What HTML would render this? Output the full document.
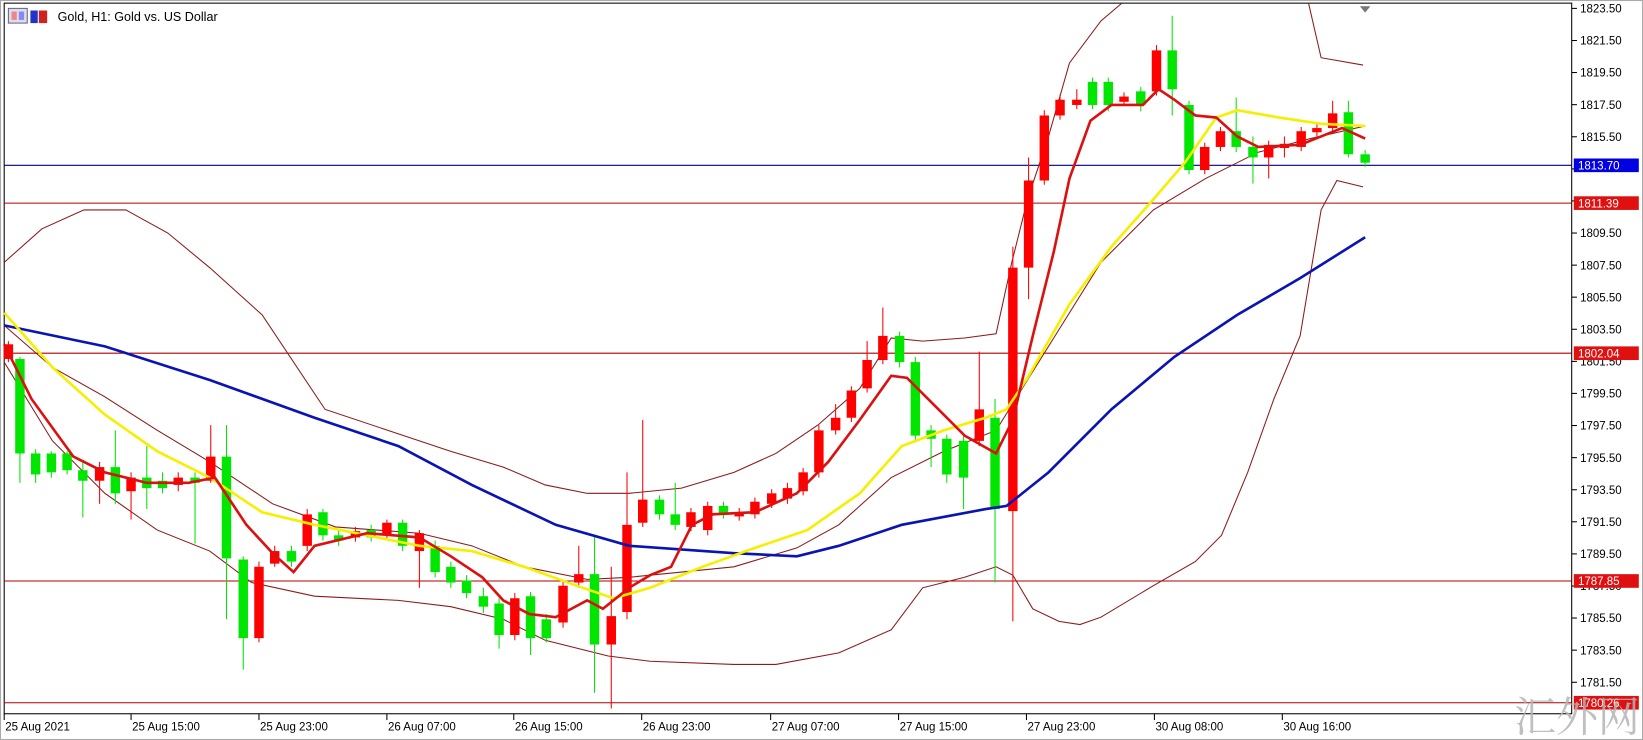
<!DOCTYPE html>
<html><head><meta charset="utf-8"><style>
html,body{margin:0;padding:0;background:#fff;width:1643px;height:740px;overflow:hidden}
svg{display:block}
text{font-family:"Liberation Sans",Tahoma,sans-serif;font-size:11px;fill:#000}
</style></head><body>
<svg width="1643" height="740" viewBox="0 0 1567 705" preserveAspectRatio="none" xmlns="http://www.w3.org/2000/svg">
<rect x="0" y="0" width="1567" height="705" fill="#fff"/>
<rect x="0.5" y="0.5" width="1566" height="704" fill="none" stroke="#aaa"/>
<rect x="4" y="3" width="1495" height="677" fill="none" stroke="#000" stroke-width="1"/>
<rect x="8" y="8" width="18" height="14" fill="#dde" stroke="#668"/>
<rect x="11" y="11" width="5" height="8" fill="#e88"/><rect x="18" y="11" width="5" height="8" fill="#88e"/>
<rect x="29" y="10" width="7" height="12" fill="#2233cc"/><rect x="37" y="10" width="8" height="12" fill="#cc2222"/>
<text x="55" y="20" style="font-size:12px">Gold, H1:  Gold vs. US Dollar</text>
<polygon points="1297,6 1307,6 1302,12" fill="#777"/>
<line x1="4" y1="157.5" x2="1499" y2="157.5" stroke="#000080"/>
<g stroke="#b00000"><line x1="4" y1="193.5" x2="1499" y2="193.5"/><line x1="4" y1="336.5" x2="1499" y2="336.5"/><line x1="4" y1="553.5" x2="1499" y2="553.5"/><line x1="4" y1="669.5" x2="1499" y2="669.5"/></g>
<g fill="none" stroke="#8b1a1a" stroke-width="1">
<polyline points="4,250 40,218 80,200 120,200 160,222 200,255 250,300 310,390 370,410 430,430 480,445 520,462 560,470 600,470 650,465 700,450 740,432 780,405 820,370 850,322 880,325 920,322 950,318 965,250 980,190 1000,130 1020,60 1050,20 1070,3"/>
<polyline points="1248,3 1260,55 1300,62"/>
<polyline points="4,310 50,350 100,378 150,410 200,440 260,480 320,502 400,508 450,520 500,540 560,552 600,550 650,545 700,540 760,522 800,500 850,455 900,430 950,410 1000,330 1050,250 1100,200 1150,170 1200,145 1250,132 1302,120"/>
<polyline points="4,345 50,420 100,470 150,505 200,525 240,555 300,568 380,572 430,578 480,590 520,610 580,625 620,630 700,633 740,633 800,622 850,600 880,560 920,550 950,540 966,548 985,580 1010,592 1030,595 1050,588 1100,558 1140,535 1165,510 1190,450 1215,380 1240,320 1260,200 1275,172 1300,178"/>
</g>
<g stroke="#ff0000" stroke-width="1">
<line x1="8" y1="325" x2="8" y2="345"/><line x1="95" y1="440" x2="95" y2="480"/><line x1="125" y1="450" x2="125" y2="495"/><line x1="170" y1="450" x2="170" y2="468"/><line x1="201" y1="405" x2="201" y2="460"/><line x1="247" y1="535" x2="247" y2="612"/><line x1="262" y1="520" x2="262" y2="540"/><line x1="293" y1="485" x2="293" y2="525"/><line x1="339" y1="502" x2="339" y2="516"/><line x1="369" y1="495" x2="369" y2="514"/><line x1="400" y1="505" x2="400" y2="560"/><line x1="491" y1="565" x2="491" y2="610"/><line x1="537" y1="553" x2="537" y2="598"/><line x1="552" y1="520" x2="552" y2="560"/><line x1="583" y1="540" x2="583" y2="675"/><line x1="598" y1="450" x2="598" y2="590"/><line x1="613" y1="400" x2="613" y2="502"/><line x1="659" y1="484" x2="659" y2="506"/><line x1="675" y1="478" x2="675" y2="510"/><line x1="705" y1="484" x2="705" y2="496"/><line x1="720" y1="474" x2="720" y2="494"/><line x1="736" y1="466" x2="736" y2="484"/><line x1="751" y1="460" x2="751" y2="480"/><line x1="766" y1="446" x2="766" y2="472"/><line x1="781" y1="405" x2="781" y2="455"/><line x1="797" y1="385" x2="797" y2="414"/><line x1="812" y1="368" x2="812" y2="402"/><line x1="827" y1="325" x2="827" y2="374"/><line x1="842" y1="293" x2="842" y2="347"/><line x1="934" y1="335" x2="934" y2="425"/><line x1="966" y1="235" x2="966" y2="592"/><line x1="981" y1="150" x2="981" y2="285"/><line x1="996" y1="105" x2="996" y2="176"/><line x1="1011" y1="90" x2="1011" y2="114"/><line x1="1027" y1="85" x2="1027" y2="104"/><line x1="1072" y1="88" x2="1072" y2="101"/><line x1="1103" y1="43" x2="1103" y2="91"/><line x1="1149" y1="136" x2="1149" y2="166"/><line x1="1164" y1="121" x2="1164" y2="144"/><line x1="1210" y1="134" x2="1210" y2="170"/><line x1="1225" y1="130" x2="1225" y2="150"/><line x1="1241" y1="121" x2="1241" y2="144"/><line x1="1256" y1="118" x2="1256" y2="130"/><line x1="1271" y1="96" x2="1271" y2="126"/>
</g>
<g stroke="#ff0000" stroke-width="9">
<line x1="8" y1="328" x2="8" y2="342"/><line x1="95" y1="445" x2="95" y2="458"/><line x1="125" y1="455" x2="125" y2="468"/><line x1="170" y1="455" x2="170" y2="462"/><line x1="201" y1="435" x2="201" y2="458"/><line x1="247" y1="540" x2="247" y2="608"/><line x1="262" y1="525" x2="262" y2="537"/><line x1="293" y1="490" x2="293" y2="520"/><line x1="339" y1="506" x2="339" y2="512"/><line x1="369" y1="498" x2="369" y2="510"/><line x1="400" y1="508" x2="400" y2="525"/><line x1="491" y1="570" x2="491" y2="605"/><line x1="537" y1="558" x2="537" y2="593"/><line x1="552" y1="547" x2="552" y2="555"/><line x1="583" y1="587" x2="583" y2="614"/><line x1="598" y1="500" x2="598" y2="583"/><line x1="613" y1="476" x2="613" y2="498"/><line x1="659" y1="488" x2="659" y2="502"/><line x1="675" y1="482" x2="675" y2="505"/><line x1="705" y1="488" x2="705" y2="492"/><line x1="720" y1="478" x2="720" y2="490"/><line x1="736" y1="470" x2="736" y2="480"/><line x1="751" y1="465" x2="751" y2="475"/><line x1="766" y1="450" x2="766" y2="468"/><line x1="781" y1="410" x2="781" y2="450"/><line x1="797" y1="398" x2="797" y2="410"/><line x1="812" y1="372" x2="812" y2="398"/><line x1="827" y1="343" x2="827" y2="370"/><line x1="842" y1="320" x2="842" y2="343"/><line x1="934" y1="390" x2="934" y2="420"/><line x1="966" y1="255" x2="966" y2="487"/><line x1="981" y1="172" x2="981" y2="255"/><line x1="996" y1="110" x2="996" y2="172"/><line x1="1011" y1="95" x2="1011" y2="110"/><line x1="1027" y1="95" x2="1027" y2="100"/><line x1="1072" y1="92" x2="1072" y2="97"/><line x1="1103" y1="48" x2="1103" y2="87"/><line x1="1149" y1="140" x2="1149" y2="162"/><line x1="1164" y1="125" x2="1164" y2="140"/><line x1="1210" y1="138" x2="1210" y2="150"/><line x1="1225" y1="137" x2="1225" y2="141"/><line x1="1241" y1="125" x2="1241" y2="140"/><line x1="1256" y1="122" x2="1256" y2="126"/><line x1="1271" y1="108" x2="1271" y2="122"/>
</g>
<g stroke="#00e600" stroke-width="1">
<line x1="19" y1="340" x2="19" y2="460"/><line x1="34" y1="428" x2="34" y2="460"/><line x1="49" y1="430" x2="49" y2="455"/><line x1="64" y1="430" x2="64" y2="452"/><line x1="79" y1="440" x2="79" y2="493"/><line x1="110" y1="410" x2="110" y2="480"/><line x1="140" y1="425" x2="140" y2="485"/><line x1="155" y1="450" x2="155" y2="470"/><line x1="186" y1="450" x2="186" y2="518"/><line x1="216" y1="405" x2="216" y2="590"/><line x1="232" y1="530" x2="232" y2="638"/><line x1="278" y1="520" x2="278" y2="540"/><line x1="308" y1="485" x2="308" y2="515"/><line x1="323" y1="505" x2="323" y2="520"/><line x1="354" y1="500" x2="354" y2="516"/><line x1="384" y1="495" x2="384" y2="525"/><line x1="415" y1="515" x2="415" y2="550"/><line x1="430" y1="535" x2="430" y2="560"/><line x1="445" y1="548" x2="445" y2="570"/><line x1="461" y1="560" x2="461" y2="584"/><line x1="476" y1="570" x2="476" y2="618"/><line x1="506" y1="564" x2="506" y2="624"/><line x1="521" y1="585" x2="521" y2="612"/><line x1="567" y1="510" x2="567" y2="660"/><line x1="629" y1="472" x2="629" y2="495"/><line x1="644" y1="460" x2="644" y2="505"/><line x1="690" y1="478" x2="690" y2="494"/><line x1="858" y1="316" x2="858" y2="350"/><line x1="873" y1="340" x2="873" y2="420"/><line x1="888" y1="405" x2="888" y2="445"/><line x1="903" y1="414" x2="903" y2="460"/><line x1="919" y1="415" x2="919" y2="485"/><line x1="949" y1="380" x2="949" y2="555"/><line x1="1042" y1="74" x2="1042" y2="104"/><line x1="1057" y1="74" x2="1057" y2="106"/><line x1="1088" y1="83" x2="1088" y2="106"/><line x1="1118" y1="15" x2="1118" y2="110"/><line x1="1134" y1="96" x2="1134" y2="166"/><line x1="1179" y1="93" x2="1179" y2="145"/><line x1="1195" y1="130" x2="1195" y2="175"/><line x1="1286" y1="96" x2="1286" y2="150"/><line x1="1302" y1="143" x2="1302" y2="159"/>
</g>
<g stroke="#00e600" stroke-width="9">
<line x1="19" y1="342" x2="19" y2="432"/><line x1="34" y1="432" x2="34" y2="452"/><line x1="49" y1="432" x2="49" y2="450"/><line x1="64" y1="432" x2="64" y2="448"/><line x1="79" y1="448" x2="79" y2="458"/><line x1="110" y1="445" x2="110" y2="470"/><line x1="140" y1="455" x2="140" y2="465"/><line x1="155" y1="458" x2="155" y2="465"/><line x1="186" y1="455" x2="186" y2="460"/><line x1="216" y1="435" x2="216" y2="532"/><line x1="232" y1="533" x2="232" y2="608"/><line x1="278" y1="525" x2="278" y2="535"/><line x1="308" y1="488" x2="308" y2="510"/><line x1="323" y1="510" x2="323" y2="515"/><line x1="354" y1="505" x2="354" y2="512"/><line x1="384" y1="498" x2="384" y2="520"/><line x1="415" y1="520" x2="415" y2="545"/><line x1="430" y1="540" x2="430" y2="555"/><line x1="445" y1="553" x2="445" y2="565"/><line x1="461" y1="568" x2="461" y2="578"/><line x1="476" y1="575" x2="476" y2="605"/><line x1="506" y1="568" x2="506" y2="608"/><line x1="521" y1="590" x2="521" y2="608"/><line x1="567" y1="547" x2="567" y2="614"/><line x1="629" y1="476" x2="629" y2="490"/><line x1="644" y1="490" x2="644" y2="500"/><line x1="690" y1="482" x2="690" y2="490"/><line x1="858" y1="320" x2="858" y2="345"/><line x1="873" y1="345" x2="873" y2="415"/><line x1="888" y1="410" x2="888" y2="418"/><line x1="903" y1="418" x2="903" y2="452"/><line x1="919" y1="420" x2="919" y2="455"/><line x1="949" y1="398" x2="949" y2="485"/><line x1="1042" y1="78" x2="1042" y2="100"/><line x1="1057" y1="78" x2="1057" y2="100"/><line x1="1088" y1="87" x2="1088" y2="100"/><line x1="1118" y1="48" x2="1118" y2="85"/><line x1="1134" y1="100" x2="1134" y2="162"/><line x1="1179" y1="125" x2="1179" y2="140"/><line x1="1195" y1="140" x2="1195" y2="150"/><line x1="1286" y1="107" x2="1286" y2="147"/><line x1="1302" y1="147" x2="1302" y2="155"/>
</g>
<polyline fill="none" stroke="#0a14b4" stroke-width="2.5" points="4,310 100,330 200,362 300,398 380,425 450,462 530,500 600,520 700,527 760,530 800,520 860,500 940,485 960,482 1000,450 1060,390 1120,340 1180,300 1240,265 1302,226"/>
<polyline fill="none" stroke="#f5f000" stroke-width="2.5" points="4,298 50,350 100,395 150,430 200,455 250,488 300,500 350,510 400,520 450,525 500,540 550,558 585,570 620,560 670,540 720,522 770,505 820,470 860,425 900,410 940,398 960,390 980,360 1020,290 1060,235 1100,190 1130,155 1160,112 1180,105 1220,112 1260,118 1302,120"/>
<polyline fill="none" stroke="#dd1010" stroke-width="2.5" points="4,328 30,380 70,435 100,450 140,460 180,460 205,455 235,500 260,527 280,545 300,520 350,508 400,512 430,530 460,550 480,572 505,585 530,588 560,572 575,580 600,560 620,548 640,540 660,500 680,490 720,488 760,470 790,440 820,400 850,358 865,360 890,385 920,415 950,432 966,400 985,320 1005,240 1020,170 1040,115 1060,100 1090,100 1105,85 1120,95 1140,110 1160,112 1180,130 1200,140 1240,138 1260,130 1280,122 1302,132"/>
<g stroke="#000">
<line x1="1499" y1="8" x2="1504" y2="8"/><line x1="1499" y1="38.6" x2="1504" y2="38.6"/><line x1="1499" y1="69.1" x2="1504" y2="69.1"/><line x1="1499" y1="99.7" x2="1504" y2="99.7"/><line x1="1499" y1="130.3" x2="1504" y2="130.3"/><line x1="1499" y1="160.9" x2="1504" y2="160.9"/><line x1="1499" y1="191.4" x2="1504" y2="191.4"/><line x1="1499" y1="222" x2="1504" y2="222"/><line x1="1499" y1="252.6" x2="1504" y2="252.6"/><line x1="1499" y1="283.1" x2="1504" y2="283.1"/><line x1="1499" y1="313.7" x2="1504" y2="313.7"/><line x1="1499" y1="344.3" x2="1504" y2="344.3"/><line x1="1499" y1="374.8" x2="1504" y2="374.8"/><line x1="1499" y1="405.4" x2="1504" y2="405.4"/><line x1="1499" y1="436" x2="1504" y2="436"/><line x1="1499" y1="466.6" x2="1504" y2="466.6"/><line x1="1499" y1="497.1" x2="1504" y2="497.1"/><line x1="1499" y1="527.7" x2="1504" y2="527.7"/><line x1="1499" y1="558.3" x2="1504" y2="558.3"/><line x1="1499" y1="588.8" x2="1504" y2="588.8"/><line x1="1499" y1="619.4" x2="1504" y2="619.4"/><line x1="1499" y1="650" x2="1504" y2="650"/>
</g>
<g>
<text x="1507" y="12">1823.50</text><text x="1507" y="42.6">1821.50</text><text x="1507" y="73.1">1819.50</text><text x="1507" y="103.7">1817.50</text><text x="1507" y="134.3">1815.50</text><text x="1507" y="226">1809.50</text><text x="1507" y="256.6">1807.50</text><text x="1507" y="287.1">1805.50</text><text x="1507" y="317.7">1803.50</text><text x="1507" y="348.3">1801.50</text><text x="1507" y="378.8">1799.50</text><text x="1507" y="409.4">1797.50</text><text x="1507" y="440">1795.50</text><text x="1507" y="470.6">1793.50</text><text x="1507" y="501.1">1791.50</text><text x="1507" y="531.7">1789.50</text><text x="1507" y="562.3">1787.50</text><text x="1507" y="592.8">1785.50</text><text x="1507" y="623.4">1783.50</text><text x="1507" y="654">1781.50</text>
</g>
<rect x="1501" y="151" width="62" height="13" fill="#0000e0"/><text x="1505" y="161.5" style="fill:#fff">1813.70</text>
<rect x="1501" y="187" width="62" height="13" fill="#e01010"/><text x="1505" y="197.5" style="fill:#fff">1811.39</text>
<rect x="1501" y="330" width="62" height="13" fill="#e01010"/><text x="1505" y="340.5" style="fill:#fff">1802.04</text>
<rect x="1501" y="547" width="62" height="13" fill="#e01010"/><text x="1505" y="557.5" style="fill:#fff">1787.85</text>
<rect x="1501" y="663" width="62" height="13" fill="#e01010"/><text x="1505" y="673.5" style="fill:#fff">1780.26</text>
<g stroke="#000"><line x1="4" y1="680" x2="4" y2="686"/><line x1="125" y1="680" x2="125" y2="686"/><line x1="247" y1="680" x2="247" y2="686"/><line x1="369" y1="680" x2="369" y2="686"/><line x1="490" y1="680" x2="490" y2="686"/><line x1="612" y1="680" x2="612" y2="686"/><line x1="735" y1="680" x2="735" y2="686"/><line x1="857" y1="680" x2="857" y2="686"/><line x1="979" y1="680" x2="979" y2="686"/><line x1="1101" y1="680" x2="1101" y2="686"/><line x1="1223" y1="680" x2="1223" y2="686"/></g>
<g><text x="5" y="696">25 Aug 2021</text><text x="126" y="696">25 Aug 15:00</text><text x="248" y="696">25 Aug 23:00</text><text x="370" y="696">26 Aug 07:00</text><text x="491" y="696">26 Aug 15:00</text><text x="613" y="696">26 Aug 23:00</text><text x="736" y="696">27 Aug 07:00</text><text x="858" y="696">27 Aug 15:00</text><text x="980" y="696">27 Aug 23:00</text><text x="1102" y="696">30 Aug 08:00</text><text x="1224" y="696">30 Aug 16:00</text></g>
<text x="1444" y="697" style="font-family:'Noto Serif CJK SC','WenQuanYi Zen Hei',serif;font-size:40px;fill:#b4b4b4;opacity:.85">汇外网</text>
</svg>
</body></html>
